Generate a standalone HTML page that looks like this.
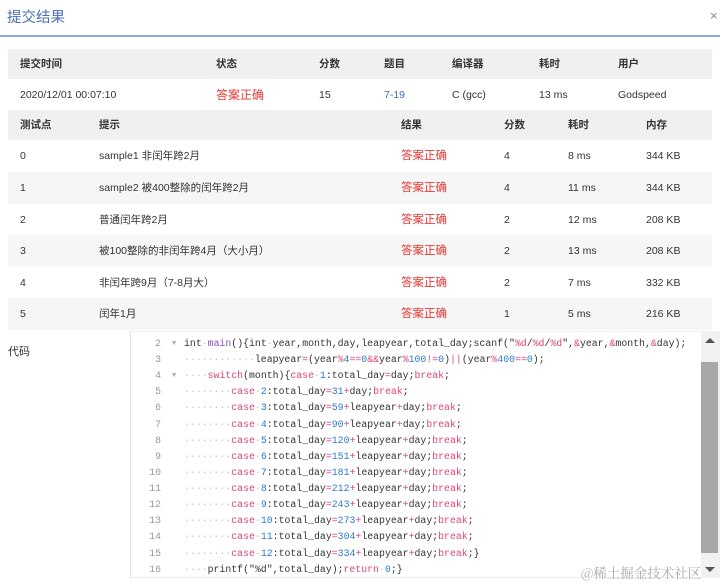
<!DOCTYPE html>
<html><head><meta charset="utf-8"><style>
*{margin:0;padding:0;box-sizing:border-box}
body{width:720px;height:584px;background:#fff;font-family:"Liberation Sans","Noto Sans CJK SC",sans-serif;font-size:10.5px;color:#333;position:relative;overflow:hidden}
.title{position:absolute;left:7px;top:6px;font-size:14.5px;color:#4a6fb5}
.x{position:absolute;left:710px;top:8px;font-size:13px;color:#888}
.line{position:absolute;left:0;top:35px;width:720px;height:2px;background:#8eaad6}
.row{position:absolute;left:8px;width:704px;height:32px}
.row span{position:absolute;top:0;line-height:32px;white-space:nowrap}
.hd{background:#f0f0f0;font-weight:bold;color:#333}
.g{background:#f6f6f6}
.red{color:#e53935}
.blue{color:#3f6fb5}
.lbl{position:absolute;left:8px;top:343px;font-size:11px}
.code{position:absolute;left:130px;top:331px;width:590px;height:247px;border-left:1px solid #e4e4e4;border-top:1px solid #eee;border-bottom:1px solid #eee;font-family:"Liberation Mono",monospace;font-size:9.85px;overflow:hidden}
.code>div{margin-top:2px}
.ln{position:absolute;left:0;width:30px;text-align:right;color:#999}
.fd{position:absolute;left:41px;color:#aaa;font-size:7px}
.cl{position:absolute;left:53px;white-space:pre;color:#333}
.d{color:#c4c4c4}.k{color:#e2457a}.n{color:#2b7bd0}.o{color:#e2457a}.f{color:#8a4fc0}
.sb{position:absolute;left:701px;top:331px;width:19px;height:247px;background:#f1f1f1}
.th{position:absolute;left:701px;top:362px;width:17px;height:191px;background:#a8a8a8}
.wm{position:absolute;left:581px;top:562px;font-size:13.5px;color:#aaa;font-family:"Noto Serif CJK SC",serif}
</style></head><body>
<div class="title">提交结果</div><div class="x">×</div>
<div class="line"></div>
<div class="row hd" style="top:49px;height:30px"><span style="left:12px;line-height:30px">提交时间</span><span style="left:208px;line-height:30px">状态</span><span style="left:311px;line-height:30px">分数</span><span style="left:376px;line-height:30px">题目</span><span style="left:444px;line-height:30px">编译器</span><span style="left:531px;line-height:30px">耗时</span><span style="left:610px;line-height:30px">用户</span></div>
<div class="row" style="top:79px;height:31px"><span style="left:12px">2020/12/01 00:07:10</span><span class="red" style="left:208px;font-size:12px">答案正确</span><span style="left:311px">15</span><span class="blue" style="left:376px">7-19</span><span style="left:444px">C (gcc)</span><span style="left:531px">13 ms</span><span style="left:610px">Godspeed</span></div>
<div class="row hd" style="top:110px;height:30px"><span style="left:12px;line-height:30px">测试点</span><span style="left:91px;line-height:30px">提示</span><span style="left:393px;line-height:30px">结果</span><span style="left:496px;line-height:30px">分数</span><span style="left:560px;line-height:30px">耗时</span><span style="left:638px;line-height:30px">内存</span></div>
<div class="row" style="top:140px"><span style="left:12px">0</span><span style="left:91px">sample1 非闰年跨2月</span><span class="red" style="left:393px;font-size:11.5px">答案正确</span><span style="left:496px">4</span><span style="left:560px">8 ms</span><span style="left:638px">344 KB</span></div>
<div class="row g" style="top:172px"><span style="left:12px">1</span><span style="left:91px">sample2 被400整除的闰年跨2月</span><span class="red" style="left:393px;font-size:11.5px">答案正确</span><span style="left:496px">4</span><span style="left:560px">11 ms</span><span style="left:638px">344 KB</span></div>
<div class="row" style="top:204px"><span style="left:12px">2</span><span style="left:91px">普通闰年跨2月</span><span class="red" style="left:393px;font-size:11.5px">答案正确</span><span style="left:496px">2</span><span style="left:560px">12 ms</span><span style="left:638px">208 KB</span></div>
<div class="row g" style="top:235px"><span style="left:12px">3</span><span style="left:91px">被100整除的非闰年跨4月（大小月）</span><span class="red" style="left:393px;font-size:11.5px">答案正确</span><span style="left:496px">2</span><span style="left:560px">13 ms</span><span style="left:638px">208 KB</span></div>
<div class="row" style="top:267px"><span style="left:12px">4</span><span style="left:91px">非闰年跨9月（7-8月大）</span><span class="red" style="left:393px;font-size:11.5px">答案正确</span><span style="left:496px">2</span><span style="left:560px">7 ms</span><span style="left:638px">332 KB</span></div>
<div class="row g" style="top:298px"><span style="left:12px">5</span><span style="left:91px">闰年1月</span><span class="red" style="left:393px;font-size:11.5px">答案正确</span><span style="left:496px">1</span><span style="left:560px">5 ms</span><span style="left:638px">216 KB</span></div>
<div class="lbl">代码</div>
<div class="code">
<div class="ln" style="top:4px">2</div><div class="fd" style="top:6px">▼</div><div class="cl" style="top:4px">int<span class="d">·</span><span class="f">main</span>(){int<span class="d">·</span>year,month,day,leapyear,total_day;scanf("<span class="o">%d</span>/<span class="o">%d</span>/<span class="o">%d</span>",<span class="o">&amp;</span>year,<span class="o">&amp;</span>month,<span class="o">&amp;</span>day);</div>
<div class="ln" style="top:20px">3</div><div class="cl" style="top:20px"><span class="d">············</span>leapyear<span class="o">=</span>(year<span class="o">%</span><span class="n">4</span><span class="o">==</span><span class="n">0</span><span class="o">&amp;&amp;</span>year<span class="o">%</span><span class="n">100</span><span class="o">!=</span><span class="n">0</span>)<span class="o">||</span>(year<span class="o">%</span><span class="n">400</span><span class="o">==</span><span class="n">0</span>);</div>
<div class="ln" style="top:36px">4</div><div class="fd" style="top:38px">▼</div><div class="cl" style="top:36px"><span class="d">····</span><span class="k">switch</span>(month){<span class="k">case</span><span class="d">·</span><span class="n">1</span>:total_day<span class="o">=</span>day;<span class="k">break</span>;</div>
<div class="ln" style="top:52px">5</div><div class="cl" style="top:52px"><span class="d">········</span><span class="k">case</span><span class="d">·</span><span class="n">2</span>:total_day<span class="o">=</span><span class="n">31</span><span class="o">+</span>day;<span class="k">break</span>;</div>
<div class="ln" style="top:68px">6</div><div class="cl" style="top:68px"><span class="d">········</span><span class="k">case</span><span class="d">·</span><span class="n">3</span>:total_day<span class="o">=</span><span class="n">59</span><span class="o">+</span>leapyear<span class="o">+</span>day;<span class="k">break</span>;</div>
<div class="ln" style="top:85px">7</div><div class="cl" style="top:85px"><span class="d">········</span><span class="k">case</span><span class="d">·</span><span class="n">4</span>:total_day<span class="o">=</span><span class="n">90</span><span class="o">+</span>leapyear<span class="o">+</span>day;<span class="k">break</span>;</div>
<div class="ln" style="top:101px">8</div><div class="cl" style="top:101px"><span class="d">········</span><span class="k">case</span><span class="d">·</span><span class="n">5</span>:total_day<span class="o">=</span><span class="n">120</span><span class="o">+</span>leapyear<span class="o">+</span>day;<span class="k">break</span>;</div>
<div class="ln" style="top:117px">9</div><div class="cl" style="top:117px"><span class="d">········</span><span class="k">case</span><span class="d">·</span><span class="n">6</span>:total_day<span class="o">=</span><span class="n">151</span><span class="o">+</span>leapyear<span class="o">+</span>day;<span class="k">break</span>;</div>
<div class="ln" style="top:133px">10</div><div class="cl" style="top:133px"><span class="d">········</span><span class="k">case</span><span class="d">·</span><span class="n">7</span>:total_day<span class="o">=</span><span class="n">181</span><span class="o">+</span>leapyear<span class="o">+</span>day;<span class="k">break</span>;</div>
<div class="ln" style="top:149px">11</div><div class="cl" style="top:149px"><span class="d">········</span><span class="k">case</span><span class="d">·</span><span class="n">8</span>:total_day<span class="o">=</span><span class="n">212</span><span class="o">+</span>leapyear<span class="o">+</span>day;<span class="k">break</span>;</div>
<div class="ln" style="top:165px">12</div><div class="cl" style="top:165px"><span class="d">········</span><span class="k">case</span><span class="d">·</span><span class="n">9</span>:total_day<span class="o">=</span><span class="n">243</span><span class="o">+</span>leapyear<span class="o">+</span>day;<span class="k">break</span>;</div>
<div class="ln" style="top:181px">13</div><div class="cl" style="top:181px"><span class="d">········</span><span class="k">case</span><span class="d">·</span><span class="n">10</span>:total_day<span class="o">=</span><span class="n">273</span><span class="o">+</span>leapyear<span class="o">+</span>day;<span class="k">break</span>;</div>
<div class="ln" style="top:197px">14</div><div class="cl" style="top:197px"><span class="d">········</span><span class="k">case</span><span class="d">·</span><span class="n">11</span>:total_day<span class="o">=</span><span class="n">304</span><span class="o">+</span>leapyear<span class="o">+</span>day;<span class="k">break</span>;</div>
<div class="ln" style="top:214px">15</div><div class="cl" style="top:214px"><span class="d">········</span><span class="k">case</span><span class="d">·</span><span class="n">12</span>:total_day<span class="o">=</span><span class="n">334</span><span class="o">+</span>leapyear<span class="o">+</span>day;<span class="k">break</span>;}</div>
<div class="ln" style="top:230px">16</div><div class="cl" style="top:230px"><span class="d">····</span>printf("%d",total_day);<span class="k">return</span><span class="d">·</span><span class="n">0</span>;}</div>
</div>
<div class="sb"></div><div class="th"></div>
<div style="position:absolute;left:705px;top:338px;width:0;height:0;border-left:5px solid transparent;border-right:5px solid transparent;border-bottom:5px solid #555"></div>
<div style="position:absolute;left:705px;top:567px;width:0;height:0;border-left:5px solid transparent;border-right:5px solid transparent;border-top:5px solid #555"></div>
<div class="wm">@稀土掘金技术社区</div>
</body></html>
